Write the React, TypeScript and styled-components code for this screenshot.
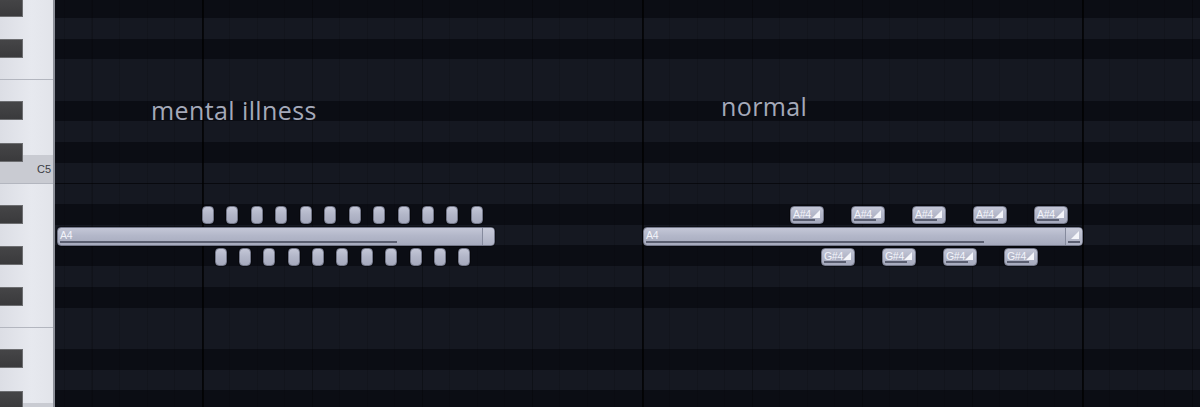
import * as React from "react";
import styled, { createGlobalStyle, css } from "styled-components";

const ROW_H = 20.7;
const ROW_OFFSET = -2.8;
const KEYS_LEFT = 55;

type KeyName = { name: string; black: boolean };

const KEYS: KeyName[] = [
  "G#5", "G5", "F#5", "F5", "E5", "D#5", "D5", "C#5", "C5", "B4", "A#4",
  "A4", "G#4", "G4", "F#4", "F4", "E4", "D#4", "D4", "C#4", "C4",
].map((name) => ({ name, black: name.includes("#") }));

const range = (n: number) => Array.from({ length: n }, (_, i) => i);

export default function App() {
  return (
    <>
      <GlobalStyle />
      <Roll>
        <Keyboard>
          <KeyStack>
            {KEYS.map((k) => (
              <KeyRow
                key={k.name}
                $c={k.name.startsWith("C") && !k.black}
                $lineBelow={k.name.startsWith("F") && !k.black}
                $lineAbove={k.name.startsWith("B")}
              >
                {k.black && <BlackKey />}
                {k.name === "C5" && <KeyLabel>C5</KeyLabel>}
              </KeyRow>
            ))}
          </KeyStack>
        </Keyboard>

        <Grid>
          <RowStack>
            {KEYS.map((k) => (
              <GridRow
                key={k.name}
                $black={k.black}
                $octave={k.name.startsWith("B")}
              />
            ))}
          </RowStack>
          <GridLines />

          <Caption style={{ left: 151 - KEYS_LEFT, top: 95 }}>mental illness</Caption>
          <Caption style={{ left: 721 - KEYS_LEFT, top: 91 }}>normal</Caption>

          {/* mental illness */}
          <LongNote style={{ left: 57 - KEYS_LEFT, width: 438 }}>
            <NoteBody>
              <NoteText>A4</NoteText>
              <Velocity style={{ width: 337 }} />
            </NoteBody>
            <EndCap />
          </LongNote>
          <Lane $gap={12.45} style={{ left: 202 - KEYS_LEFT, top: 206 }}>
            {range(12).map((i) => (
              <Tick key={i} />
            ))}
          </Lane>
          <Lane $gap={12.4} style={{ left: 214.5 - KEYS_LEFT, top: 248 }}>
            {range(11).map((i) => (
              <Tick key={i} />
            ))}
          </Lane>

          {/* normal */}
          <LongNote style={{ left: 643 - KEYS_LEFT, width: 440 }}>
            <NoteBody>
              <NoteText>A4</NoteText>
              <Velocity style={{ width: 338 }} />
            </NoteBody>
            <EndCap $grip>
              <Corner />
              <CapLine />
            </EndCap>
          </LongNote>
          <Lane $gap={27} style={{ left: 790 - KEYS_LEFT, top: 206 }}>
            {range(5).map((i) => (
              <ShortNote key={i}>
                <NoteText>A#4</NoteText>
                <Corner />
                <Velocity style={{ width: 22 }} />
              </ShortNote>
            ))}
          </Lane>
          <Lane $gap={27} style={{ left: 821 - KEYS_LEFT, top: 248 }}>
            {range(4).map((i) => (
              <ShortNote key={i}>
                <NoteText>G#4</NoteText>
                <Corner />
                <Velocity style={{ width: 22 }} />
              </ShortNote>
            ))}
          </Lane>
        </Grid>
      </Roll>
    </>
  );
}

const GlobalStyle = createGlobalStyle`
  html, body {
    margin: 0;
    padding: 0;
    background: #0d0f16;
    overflow: hidden;
  }
  #root {
    height: 407px;
  }
`;

const Roll = styled.div`
  display: flex;
  width: 1200px;
  height: 407px;
  overflow: hidden;
  font-family: "Open Sans", "Noto Sans", sans-serif;
`;

const Keyboard = styled.div`
  width: 53px;
  flex: none;
  overflow: hidden;
  background: linear-gradient(90deg, #dcdee5 0%, #e7e9ef 60%, #e2e4ea 100%);
  border-right: 2px solid #8d9099;
`;

const KeyStack = styled.div`
  display: flex;
  flex-direction: column;
  margin-top: ${ROW_OFFSET}px;
`;

const KeyRow = styled.div<{ $c: boolean; $lineBelow: boolean; $lineAbove: boolean }>`
  position: relative;
  height: ${ROW_H}px;
  flex: none;
  display: flex;
  align-items: center;
  justify-content: flex-end;
  box-sizing: border-box;
  ${(p) => p.$lineBelow && css`border-bottom: 1px solid #b3b6bf;`}
  ${(p) => p.$lineAbove && css`border-top: 1px solid #b3b6bf;`}
  ${(p) =>
    p.$c &&
    css`
      background: #c9cbd2;
      &::before {
        content: "";
        position: absolute;
        left: 0;
        right: 0;
        top: -8px;
        height: 8px;
        background: #c9cbd2;
      }
    `}
`;

const BlackKey = styled.div`
  position: absolute;
  z-index: 2;
  left: 0;
  top: 0.5px;
  width: 23px;
  height: 19px;
  background: linear-gradient(180deg, #454547, #3a3a3c);
  border: 1px solid #6c6d70;
  border-left: none;
  box-sizing: border-box;
`;

const KeyLabel = styled.span`
  position: relative;
  z-index: 1;
  padding-right: 2px;
  font-family: "Liberation Sans", Arial, sans-serif;
  font-size: 11px;
  color: #3b3d44;
  margin-top: -8px;
`;

const Grid = styled.div`
  position: relative;
  flex: 1;
  overflow: hidden;
`;

const RowStack = styled.div`
  display: flex;
  flex-direction: column;
  margin-top: ${ROW_OFFSET}px;
`;

const GridRow = styled.div<{ $black: boolean; $octave: boolean }>`
  height: ${ROW_H}px;
  flex: none;
  box-sizing: border-box;
  background: ${(p) => (p.$black ? "#0b0d14" : "#151821")};
  ${(p) => p.$octave && css`border-top: 1px solid #08090e;`}
`;

const GridLines = styled.div`
  position: absolute;
  inset: 0;
  pointer-events: none;
  background:
    repeating-linear-gradient(
      90deg,
      transparent 0 147px,
      rgba(0, 0, 0, 0.7) 147px 149px,
      transparent 149px 440px
    ),
    repeating-linear-gradient(
      90deg,
      transparent 0 37px,
      rgba(0, 0, 0, 0.2) 37px 38px,
      transparent 38px 110px
    ),
    repeating-linear-gradient(
      90deg,
      transparent 0 9px,
      rgba(0, 0, 0, 0.12) 9px 10px,
      transparent 10px 27.5px
    );
`;

const Caption = styled.div`
  position: absolute;
  font-size: 25px;
  line-height: 30px;
  color: #a4a9b9;
  letter-spacing: 0.4px;
  white-space: nowrap;
`;

const noteFace = css`
  background: linear-gradient(180deg, #c4c7d7 0%, #b3b7c9 45%, #a6aabd 100%);
  border: 1px solid #737789;
  box-shadow: 0 0 0 1px rgba(0, 0, 0, 0.35);
  box-sizing: border-box;
`;

const Lane = styled.div<{ $gap: number }>`
  position: absolute;
  display: flex;
  gap: ${(p) => p.$gap}px;
`;

const LongNote = styled.div`
  position: absolute;
  top: 227px;
  height: 19px;
  display: flex;
  ${noteFace};
  border-radius: 4px;
  overflow: hidden;
`;

const NoteBody = styled.div`
  position: relative;
  flex: 1;
`;

const EndCap = styled.div<{ $grip?: boolean }>`
  position: relative;
  width: ${(p) => (p.$grip ? 16 : 11)}px;
  flex: none;
  border-left: 1px solid #858a9d;
  background: linear-gradient(180deg, #c8cbda, #aeb2c4);
`;

const CapLine = styled.div`
  position: absolute;
  left: 2px;
  right: 2px;
  bottom: 2px;
  height: 2px;
  background: #5b5f71;
`;

const NoteText = styled.span`
  position: absolute;
  left: 2px;
  top: 1px;
  font-family: "Liberation Sans", Arial, sans-serif;
  font-size: 10.5px;
  line-height: 12px;
  color: #f3f4fa;
  letter-spacing: -0.3px;
`;

const Velocity = styled.div`
  position: absolute;
  left: 2px;
  bottom: 2px;
  height: 2px;
  background: #5a5e70;
`;

const Corner = styled.div`
  position: absolute;
  right: 3px;
  top: 3px;
  width: 0;
  height: 0;
  border-left: 8px solid transparent;
  border-bottom: 8px solid #f4f5fa;
`;

const ShortNote = styled.div`
  position: relative;
  flex: none;
  width: 34px;
  height: 18px;
  ${noteFace};
  border-radius: 4px;
`;

const Tick = styled.div`
  flex: none;
  width: 12px;
  height: 18px;
  ${noteFace};
  border-radius: 4px;
`;
